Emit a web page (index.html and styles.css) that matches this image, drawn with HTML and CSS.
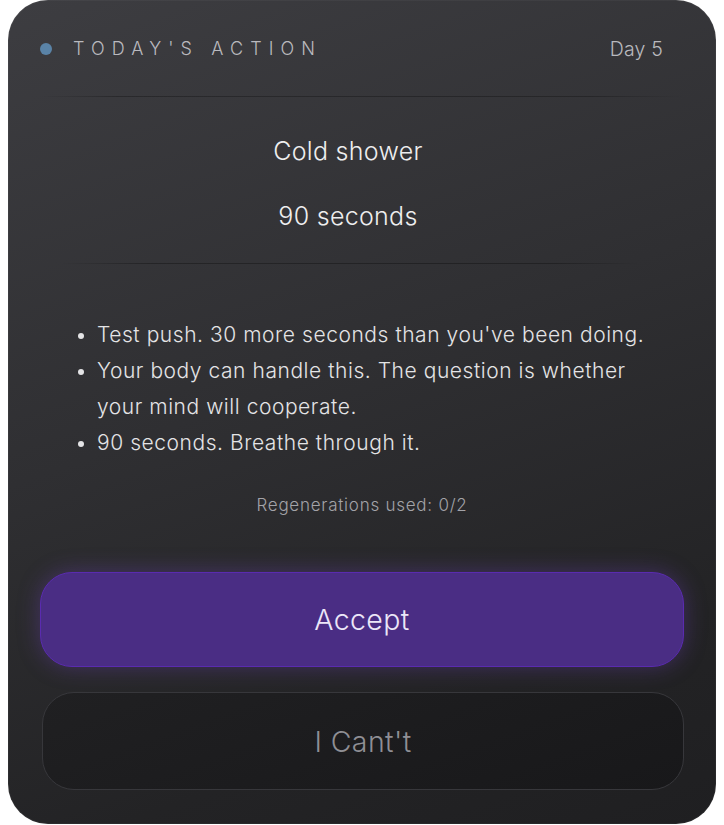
FILE: index.html
```html
<!DOCTYPE html>
<html lang="en">
<head>
<meta charset="utf-8">
<title>Today's Action</title>
<link rel="stylesheet" href="styles.css">
</head>
<body>
<div class="card">
  <header class="head">
    <div class="label"><span class="dot"></span><span class="label-text">TODAY'S ACTION</span></div>
    <div class="day">Day 5</div>
  </header>
  <div class="divider d1"></div>
  <section class="title">
    <div class="name">Cold shower</div>
    <div class="dur">90 seconds</div>
  </section>
  <div class="divider d2"></div>
  <ul class="notes">
    <li>Test push. 30 more seconds than you've been doing.</li>
    <li>Your body can handle this. The question is whether your mind will cooperate.</li>
    <li>90 seconds. Breathe through it.</li>
  </ul>
  <div class="regen">Regenerations used: 0/2</div>
  <div class="actions">
    <button class="btn accept">Accept</button>
    <button class="btn cant">I Cant't</button>
  </div>
</div>
</body>
</html>
```
FILE: styles.css
```css
html, body {
  margin: 0;
  padding: 0;
  background: #ffffff;
}
body {
  font-family: Inter, "Noto Sans", sans-serif;
  font-weight: 300;
}
.card {
  box-sizing: border-box;
  margin: 0 8px;
  height: 824px;
  border-radius: 40px;
  background: linear-gradient(160deg, #3d3d41 0%, #2f2f32 45%, #232325 80%, #1f1f21 100%);
  box-shadow: inset 0 0 0 1px rgba(255,255,255,0.04);
  padding: 37px 32px 34px 32px;
  display: flex;
  flex-direction: column;
}
.head {
  display: flex;
  justify-content: space-between;
  align-items: center;
  height: 24px;
  padding-right: 21px;
}
.label {
  display: flex;
  align-items: center;
  gap: 21px;
}
.dot {
  width: 12px;
  height: 12px;
  border-radius: 50%;
  background: #5a83a7;
}
.label-text {
  font-size: 18px;
  letter-spacing: 7.1px;
  color: #b9b9be;
  line-height: 24px;
}
.day {
  font-size: 19.5px;
  letter-spacing: 0.2px;
  color: #b9b9be;
  line-height: 24px;
}
.divider {
  height: 1px;
}
.d1 {
  margin: 35px 0 0 0;
  background: linear-gradient(90deg, rgba(0,0,0,0) 0%, rgba(0,0,0,0.28) 12%, rgba(0,0,0,0.28) 85%, rgba(0,0,0,0) 100%);
}
.title {
  display: flex;
  flex-direction: column;
  align-items: center;
  gap: 33px;
  margin-top: 38px;
  padding-right: 28px;
  padding-left: 0;
}
.name, .dur {
  font-size: 25px;
  letter-spacing: 0.3px;
  line-height: 32px;
  color: #eeeeef;
}
.d2 {
  margin: 31px 44px 0 20px;
  background: linear-gradient(90deg, rgba(0,0,0,0) 0%, rgba(0,0,0,0.3) 15%, rgba(0,0,0,0.3) 85%, rgba(0,0,0,0) 100%);
}
.notes {
  margin: 53px 0 0 0;
  padding: 0 30px 0 57px;
  font-size: 21px;
  letter-spacing: 0.55px;
  line-height: 36px;
  color: #e4e4e6;
}
.notes li::marker {
  font-size: 20px;
}
.regen {
  margin-top: 33px;
  text-align: center;
  font-size: 17px;
  letter-spacing: 0.75px;
  line-height: 22px;
  color: #a3a3a8;
}
.actions {
  margin-top: 56px;
  display: flex;
  flex-direction: column;
  gap: 25px;
}
.btn {
  font-family: Inter, "Noto Sans", sans-serif;
  font-weight: 300;
  font-size: 28.5px;
  letter-spacing: 0.4px;
  border-radius: 32px;
  cursor: pointer;
  width: 100%;
}
.accept {
  height: 95px;
  background: #4a2d84;
  border: 1.5px solid #5a2bb0;
  color: #ece6f8;
  box-shadow: 0 0 22px rgba(120, 70, 210, 0.35);
}
.cant {
  height: 98px;
  margin-left: 2px;
  width: calc(100% - 2px);
  background: linear-gradient(160deg, #202022 0%, #18181a 100%);
  border: 1.5px solid #37373b;
  color: #8f8f95;
}
```
